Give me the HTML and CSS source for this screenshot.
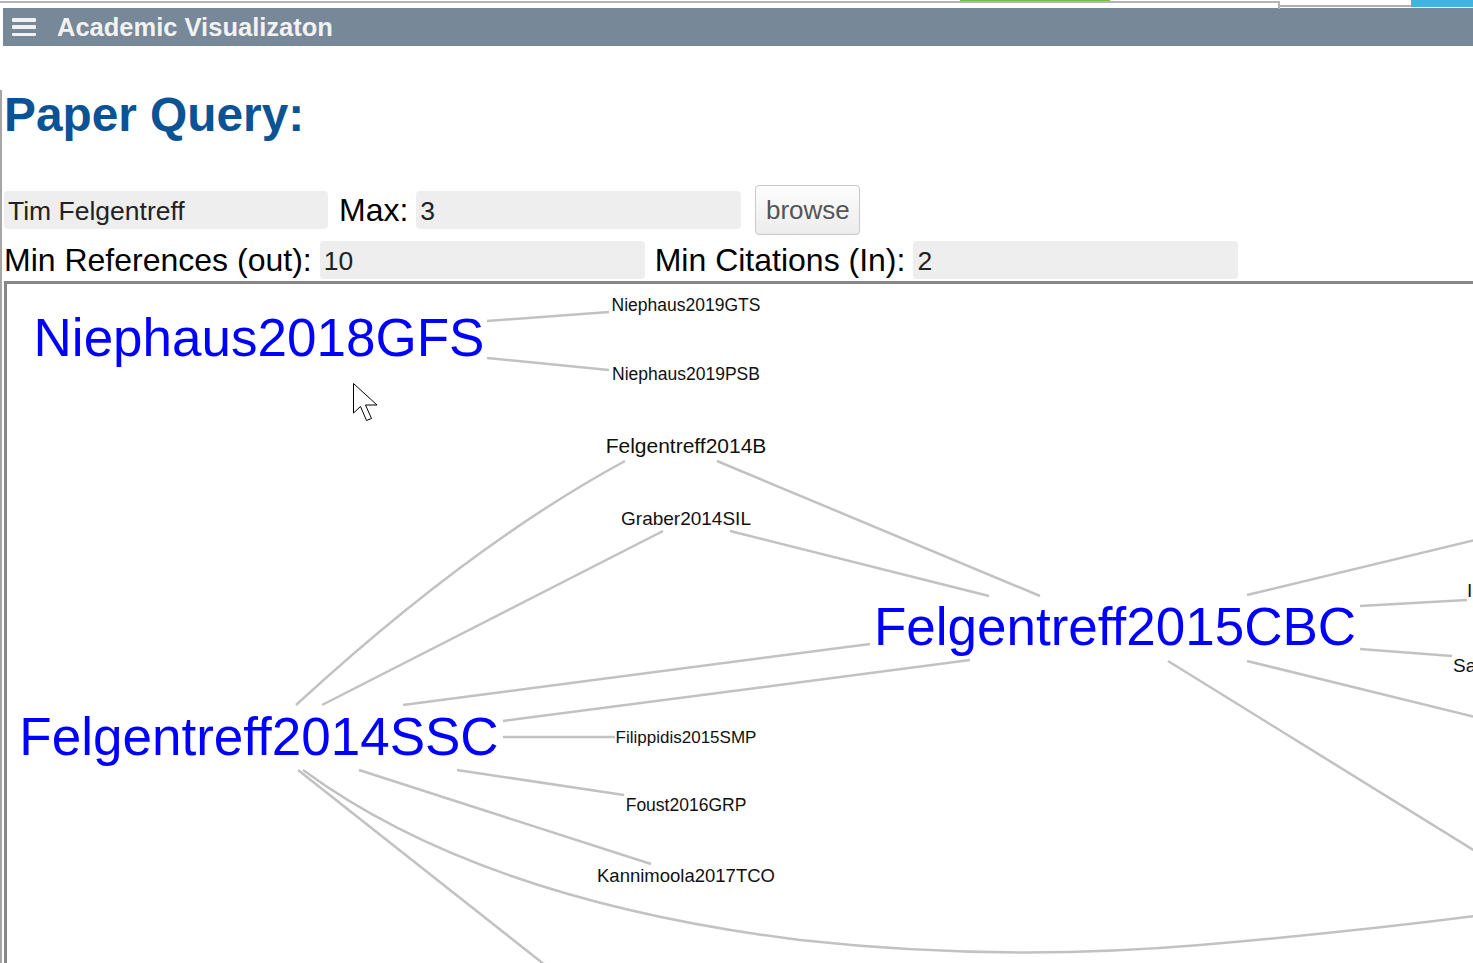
FILE: index.html
```html
<!DOCTYPE html>
<html>
<head>
<meta charset="utf-8">
<title>Academic Visualizaton</title>
<link rel="stylesheet" href="styles.css">
</head>
<body>
<div class="topstrip">
  <div class="tab-outline"></div>
  <div class="tab-rest"></div>
  <div class="tab-blue"></div>
</div>
<nav class="navbar">
  <span class="hamburger"><i></i><i></i><i></i></span>
  <span class="brand">Academic Visualizaton</span>
</nav>
<main class="page">
  <h1 class="title">Paper Query:</h1>
  <div class="row row-first">
    <input class="field field-author" type="text" value="Tim Felgentreff">
    <label class="lbl">Max:</label>
    <input class="field" type="text" value="3">
    <button class="btn">browse</button>
  </div>
  <div class="row row-second">
    <label class="lbl">Min References (out):</label>
    <input class="field" type="text" value="10">
    <label class="lbl lbl-cit">Min Citations (In):</label>
    <input class="field" type="text" value="2">
  </div>
  <div class="graph">
    <svg class="graph-svg" viewBox="7 284 1466 679" width="1466" height="679" xmlns="http://www.w3.org/2000/svg">
      <g class="edges" fill="none" stroke="#c2c2c2" stroke-width="2.5">
        <line x1="487" y1="321" x2="609" y2="312"/>
        <line x1="487" y1="358" x2="609" y2="370"/>
        <path d="M296,705 Q470,545 625,461"/>
        <line x1="717" y1="461" x2="1040" y2="596"/>
        <line x1="663" y1="531" x2="322" y2="705"/>
        <line x1="730" y1="531" x2="989" y2="596"/>
        <line x1="403" y1="705" x2="870" y2="644"/>
        <line x1="503" y1="721" x2="970" y2="660"/>
        <line x1="503" y1="737" x2="615" y2="737"/>
        <line x1="457" y1="770" x2="624" y2="795"/>
        <line x1="359" y1="770" x2="651" y2="864"/>
        <line x1="298" y1="770" x2="545" y2="965"/>
        <path d="M303,770 Q480,900 800,940 Q1000,962 1200,945 Q1350,932 1475,916"/>
        <line x1="1247" y1="595" x2="1475" y2="540"/>
        <line x1="1360" y1="606" x2="1467" y2="600"/>
        <line x1="1360" y1="649" x2="1452" y2="656"/>
        <line x1="1247" y1="661" x2="1475" y2="717"/>
        <line x1="1168" y1="661" x2="1475" y2="851"/>
      </g>
      <g class="nodes-big" fill="#0000ff" font-family="'Liberation Sans', Arial, sans-serif" font-size="53" text-anchor="middle">
        <text x="259" y="356">Niephaus2018GFS</text>
        <text x="259" y="755">Felgentreff2014SSC</text>
        <text x="1115" y="645">Felgentreff2015CBC</text>
      </g>
      <g class="nodes-small" fill="#111" font-family="'Liberation Sans', Arial, sans-serif" text-anchor="middle">
        <text x="686" y="311" font-size="17.5">Niephaus2019GTS</text>
        <text x="686" y="380" font-size="17.5">Niephaus2019PSB</text>
        <text x="686" y="453" font-size="21">Felgentreff2014B</text>
        <text x="686" y="525" font-size="19">Graber2014SIL</text>
        <text x="686" y="743" font-size="17">Filippidis2015SMP</text>
        <text x="686" y="811" font-size="17.5">Foust2016GRP</text>
        <text x="686" y="882" font-size="18.5">Kannimoola2017TCO</text>
        <text x="1467" y="597" font-size="19" text-anchor="start">I</text>
        <text x="1453" y="672" font-size="19" text-anchor="start">Sa</text>
      </g>
      <path class="cursor" d="M353.5,383.5 L353.5,413 L360.5,406.5 L366.5,420.5 L371.5,418.5 L365.5,405 L377,405 Z" fill="#fff" stroke="#000" stroke-width="1"/>
    </svg>
  </div>
</main>
</body>
</html>
```

FILE: styles.css
```css
* { box-sizing: border-box; }

html, body {
  margin: 0;
  padding: 0;
  background: #fff;
  overflow: hidden;
  height: 963px;
}

body {
  font-family: "Liberation Sans", Arial, Helvetica, sans-serif;
  color: #000;
}

.topstrip {
  display: flex;
  align-items: flex-start;
  height: 8px;
  background: #fff linear-gradient(#6fbf4a, #6fbf4a) no-repeat 960px 0 / 150px 2px;
}

.tab-outline {
  flex: 0 0 1280px;
  height: 8px;
  margin-top: 1px;
  border-top: 2px solid #b4b4b4;
  border-right: 2px solid #b4b4b4;
}

.tab-rest {
  flex: 1 1 auto;
  height: 7px;
  border-bottom: 2px solid #b0b0b0;
}

.tab-blue {
  flex: 0 0 62px;
  height: 7px;
  background: #3db6e6;
}

.navbar {
  display: flex;
  align-items: center;
  height: 38px;
  margin-left: 3px;
  background: #778899;
  color: #f2f2f2;
}

.hamburger {
  display: flex;
  flex-direction: column;
  justify-content: space-between;
  width: 24px;
  height: 18px;
  margin-left: 9px;
  margin-right: 21px;
}

.hamburger i {
  display: block;
  height: 3.5px;
  background: #f2f2f2;
  border-radius: 1px;
}

.brand {
  font-weight: bold;
  font-size: 25.5px;
  line-height: 1;
  margin-top: 1px;
}

.page {
  border-left: 2px solid #a6a6a6;
  padding-left: 1px;
  height: 917px;
}

.title {
  margin: 44px 0 0 1px;
  font-size: 47.8px;
  line-height: 50px;
  font-weight: bold;
  color: #0b5394;
}

.row {
  display: flex;
  align-items: center;
}

.row-first {
  margin-top: 45px;
  height: 50px;
}

.row-second {
  margin-top: 6px;
  height: 38px;
}

.field {
  width: 325px;
  height: 38px;
  border: none;
  border-radius: 4px;
  background: #eeeeee;
  font-family: "Liberation Sans", Arial, sans-serif;
  font-size: 26.5px;
  color: #222;
  padding: 2px 4px 0;
  margin: 0;
  outline: none;
}

.field-author {
  width: 324px;
  margin-left: 1px;
}

.lbl {
  font-size: 32px;
  line-height: 38px;
  margin: 0 8px 0 11px;
  white-space: nowrap;
}

.row-second .lbl {
  margin-left: 1px;
  margin-right: 8px;
}

.row-second .lbl-cit {
  margin-left: 10px;
  margin-right: 8px;
}

.btn {
  width: 105px;
  height: 50px;
  margin-left: 14px;
  border: 1px solid #c8c8c8;
  border-radius: 4px;
  background: linear-gradient(#fdfdfd, #ececec);
  font-family: "Liberation Sans", Arial, sans-serif;
  font-size: 26px;
  color: #555;
  padding: 0;
}

.graph {
  margin-top: 2px;
  margin-left: 1px;
  border-top: 3px solid #878787;
  border-left: 3px solid #878787;
  height: 682px;
  overflow: hidden;
}

.graph-svg {
  display: block;
}
```
